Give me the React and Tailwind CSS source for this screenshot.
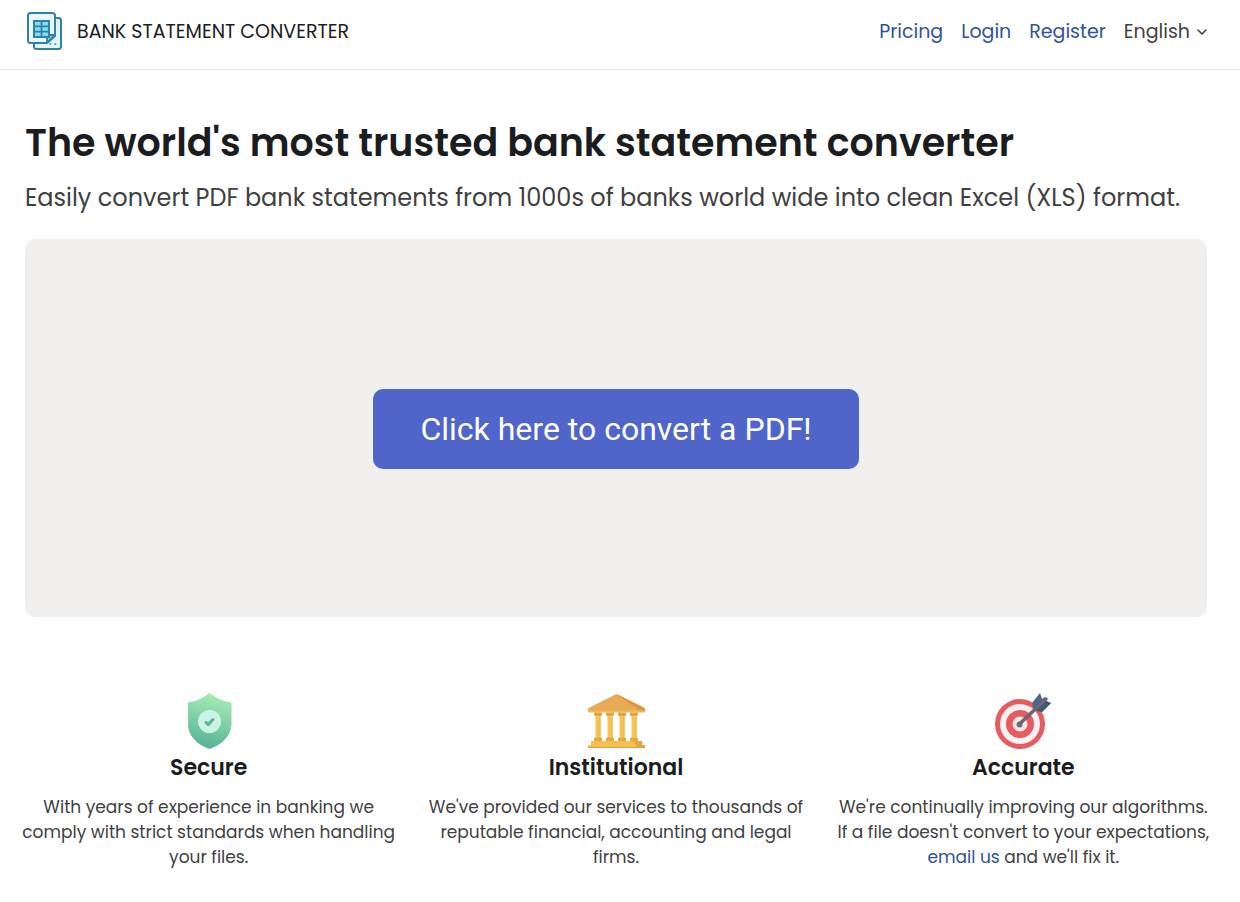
import React from 'react';

const LogoIcon = () => (
  <svg width="36" height="40" viewBox="0 0 36 40" fill="none" aria-hidden="true">
    <rect x="7" y="6" width="27" height="31" rx="2.5" fill="#dff6fd" stroke="#3380a3" strokeWidth="2" />
    <path d="M3.500 1H25.500Q28 1 28 3.500V24L20 31H3.500Q1 31 1 28.500V3.500Q1 1 3.500 1Z" fill="#e8f9fe" stroke="#3380a3" strokeWidth="2" strokeLinejoin="round" />
    <path d="M28 23L20 31V25.500Q20 23 22.500 23Z" fill="#7fd8f5" stroke="#3380a3" strokeWidth="1.800" strokeLinejoin="round" />
    <rect x="7" y="9" width="15" height="16" fill="#7fdcf8" stroke="#3380a3" strokeWidth="2" />
    <path d="M14.500 9V25M7 14.300H22M7 19.700H22" stroke="#3380a3" strokeWidth="1.800" />
    <path d="M22.500 32H24.200M27.500 32H29.200" stroke="#3380a3" strokeWidth="1.600" />
  </svg>
);

const ShieldIcon = () => (
  <svg width="60" height="60" viewBox="0 0 60 60" aria-hidden="true">
    <defs>
      <linearGradient id="shield" x1="0.6" y1="0" x2="0.4" y2="1">
        <stop offset="0" stopColor="#a8edb4" />
        <stop offset="1" stopColor="#55b295" />
      </linearGradient>
    </defs>
    <path
      d="M30.500 3Q34.500 6 39 8.500Q44.500 11.300 51 12Q52.500 12.200 52.500 14V34C52.500 46 43 54 32.500 58.300Q30.500 59.300 28.500 58.300C18 54 9 46 9 34V14Q9 12.200 10.500 12Q17 11.300 22 8.500Q26.500 6 30.500 3Z"
      fill="url(#shield)"
    />
    <circle cx="30.500" cy="31.500" r="11.500" fill="#ccf4e6" />
    <path d="M27 32.500L29.300 34.500L34 29.500" fill="none" stroke="#58b596" strokeWidth="3" strokeLinecap="round" strokeLinejoin="round" />
  </svg>
);

const BankIcon = () => (
  <svg width="60" height="60" viewBox="0 0 60 60" aria-hidden="true">
    <path d="M29 4.700Q30.500 4 32 4.700L57.500 17.500Q59 18.300 59 20V22H2V20Q2 18.300 3.500 17.500Z" fill="#e9aa55" />
    <path d="M30.500 4.400Q31.300 4.400 32 4.700L57.500 17.500Q59 18.300 59 20V22H56Z" fill="#dc973d" />
    <path d="M2 20.500H59V22.500H2Z" fill="#f1b85c" />
    {[9, 21, 33, 45].map((x) => (
      <g key={x}>
        <path d={`M${x - 1} 22.500h8v2.500l-1.500 1.500h-5l-1.500-1.500z`} fill="#e0a540" />
        <path d={`M${x + 0.5} 26.500h5v22h-5z`} fill="#f5c453" />
        <path d={`M${x + 4.500} 26.500h1v22h-1z`} fill="#e9b04a" />
        <path d={`M${x - 1} 51v-2q0-1.500 1.500-1.500h5q1.500 0 1.500 1.500v2z`} fill="#e5a941" />
      </g>
    ))}
    <path d="M5 51H56V55H59V58H2V55H5Z" fill="#f5c050" />
    <path d="M47 51H56V55H59V58H52Z" fill="#e3a541" />
    <path d="M2 57H59V58H2Z" fill="#dfa241" />
  </svg>
);

const TargetIcon = () => (
  <svg width="60" height="60" viewBox="0 0 60 60" aria-hidden="true">
    <circle cx="27" cy="34" r="25" fill="#e55b60" />
    <circle cx="27" cy="34" r="20" fill="#fbf0f1" />
    <circle cx="27" cy="34" r="14" fill="#e55b60" />
    <circle cx="27" cy="34" r="7.500" fill="#f9e8ea" />
    <circle cx="26.500" cy="34.500" r="3" fill="#8b6171" />
    <path d="M41 20L39 13L47 3L49 9L52 7L53 11L58 13L49 22Z" fill="#476b87" />
    <path d="M44 17L52 9L53 11L58 13L49 22L41 20Z" fill="#3c5b76" />
    <path d="M26.500 34L53 9" stroke="#6d6475" strokeWidth="3.500" strokeLinecap="round" />
  </svg>
);

const Feature = ({ icon, title, children }) => (
  <div className="flex flex-col items-center text-center">
    {icon}
    <h2 className="mt-0.5 text-[22px] leading-8 font-semibold text-[#1b1c1e]">{title}</h2>
    <p className="mt-[11px] text-[17px] leading-[25px] text-[#3f4042]">{children}</p>
  </div>
);

const Header = () => (
  <header className="flex items-center justify-between border-b border-[#e6e7e8] pt-3 pb-[17px] pl-[27px] pr-8">
    <a href="#" className="flex items-center gap-[14px] text-[19px] leading-[38px] text-[#1b1c1e]">
      <LogoIcon />
      BANK STATEMENT CONVERTER
    </a>
    <nav className="flex items-center gap-[18px] text-[19px] leading-[38px] text-[#2f51a0]">
      <a href="#pricing">Pricing</a>
      <a href="#login">Login</a>
      <a href="#register">Register</a>
      <div className="relative flex items-center text-[#3f4042]">
        <select aria-label="Language" className="field-sizing-content appearance-none bg-transparent pr-[18px]">
          <option>English</option>
        </select>
        <svg className="pointer-events-none absolute right-0" width="12" height="12" viewBox="0 0 12 12" fill="none" aria-hidden="true">
          <path d="M2 4L6 8L10 4" stroke="#3f4042" strokeWidth="1.600" strokeLinecap="round" strokeLinejoin="round" />
        </svg>
      </div>
    </nav>
  </header>
);

export default function App() {
  return (
    <div className="min-h-screen bg-white font-['Poppins','Inter',sans-serif]">
      <Header />
      <main className="pt-[49px] pb-8 pl-[25px] pr-[33px]">
        <h1 className="text-[38px] leading-[48px] font-semibold text-[#1b1c1e]">
          The world's most trusted bank statement converter
        </h1>
        <p className="mt-[13px] text-2xl leading-9 text-[#3f4042]">
          Easily convert PDF bank statements from 1000s of banks world wide into clean Excel (XLS) format.
        </p>
        <section className="mt-[23px] flex items-center justify-center rounded-[10px] bg-[#f0efee] pt-[150px] pb-[148px]">
          <button type="button" className="rounded-[10px] bg-[#5065c9] px-[47px] py-4 font-['Roboto',sans-serif] text-[32px] leading-[48px] text-white">
            Click here to convert a PDF!
          </button>
        </section>
        <section className="-mx-1.5 mt-[73px] grid grid-cols-3 gap-7">
          <Feature icon={<ShieldIcon />} title="Secure">
            With years of experience in banking we comply with strict standards when handling your files.
          </Feature>
          <Feature icon={<BankIcon />} title="Institutional">
            We've provided our services to thousands of reputable financial, accounting and legal firms.
          </Feature>
          <Feature icon={<TargetIcon />} title="Accurate">
            We're continually improving our algorithms. If a file doesn't convert to your expectations,{' '}
            <a href="mailto:" className="text-[#2f51a0]">email us</a> and we'll fix it.
          </Feature>
        </section>
      </main>
    </div>
  );
}
